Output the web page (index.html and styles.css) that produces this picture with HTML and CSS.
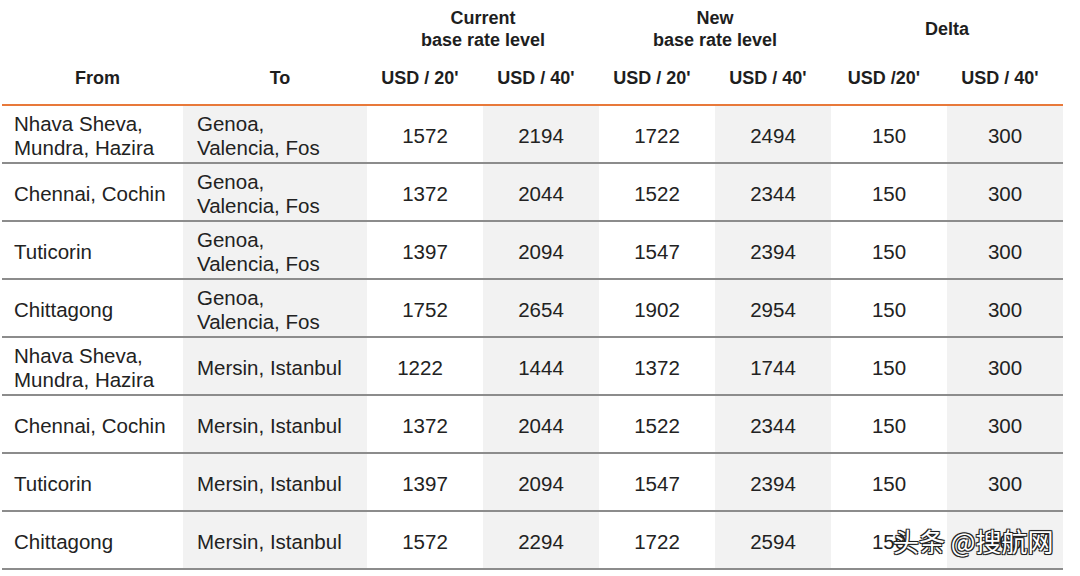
FILE: index.html
```html
<!DOCTYPE html>
<html>
<head>
<meta charset="utf-8">
<link rel="stylesheet" href="styles.css">
</head>
<body>
<div class="page">
  <table class="rates">
    <colgroup>
      <col class="c-from"><col class="c-to">
      <col class="c-num"><col class="c-num"><col class="c-num"><col class="c-num"><col class="c-num"><col class="c-num">
    </colgroup>
    <thead>
      <tr class="h1">
        <th rowspan="2" class="sub lbl">From</th>
        <th rowspan="2" class="sub lbl">To</th>
        <th colspan="2" class="grp">Current<br>base rate level</th>
        <th colspan="2" class="grp">New<br>base rate level</th>
        <th colspan="2" class="grp">Delta</th>
      </tr>
      <tr class="h2">
        <th class="sub unit">USD / 20'</th>
        <th class="sub unit">USD / 40'</th>
        <th class="sub unit">USD / 20'</th>
        <th class="sub unit">USD / 40'</th>
        <th class="sub unit">USD /20'</th>
        <th class="sub unit">USD / 40'</th>
      </tr>
    </thead>
    <tbody>
      <tr><td class="from">Nhava Sheva,<br>Mundra, Hazira</td><td class="to">Genoa,<br>Valencia, Fos</td><td>1572</td><td class="g">2194</td><td>1722</td><td class="g">2494</td><td>150</td><td class="g">300</td></tr>
      <tr><td class="from">Chennai, Cochin</td><td class="to">Genoa,<br>Valencia, Fos</td><td>1372</td><td class="g">2044</td><td>1522</td><td class="g">2344</td><td>150</td><td class="g">300</td></tr>
      <tr><td class="from">Tuticorin</td><td class="to">Genoa,<br>Valencia, Fos</td><td>1397</td><td class="g">2094</td><td>1547</td><td class="g">2394</td><td>150</td><td class="g">300</td></tr>
      <tr><td class="from">Chittagong</td><td class="to">Genoa,<br>Valencia, Fos</td><td>1752</td><td class="g">2654</td><td>1902</td><td class="g">2954</td><td>150</td><td class="g">300</td></tr>
      <tr><td class="from">Nhava Sheva,<br>Mundra, Hazira</td><td class="to">Mersin, Istanbul</td><td class="shift">1222</td><td class="g">1444</td><td>1372</td><td class="g">1744</td><td>150</td><td class="g">300</td></tr>
      <tr><td class="from">Chennai, Cochin</td><td class="to">Mersin, Istanbul</td><td>1372</td><td class="g">2044</td><td>1522</td><td class="g">2344</td><td>150</td><td class="g">300</td></tr>
      <tr><td class="from">Tuticorin</td><td class="to">Mersin, Istanbul</td><td>1397</td><td class="g">2094</td><td>1547</td><td class="g">2394</td><td>150</td><td class="g">300</td></tr>
      <tr><td class="from">Chittagong</td><td class="to">Mersin, Istanbul</td><td>1572</td><td class="g">2294</td><td>1722</td><td class="g">2594</td><td>150</td><td class="g">300</td></tr>
    </tbody>
  </table>
  <div class="watermark">头条 @搜航网</div>
</div>
</body>
</html>
```

FILE: styles.css
```css
html, body {
  margin: 0;
  padding: 0;
  background: #ffffff;
}

.page {
  position: relative;
  width: 1080px;
  height: 576px;
  padding-left: 2px;
  box-sizing: border-box;
  font-family: "Liberation Sans", Arial, sans-serif;
  color: #222222;
}

.rates {
  border-collapse: separate;
  border-spacing: 0;
  table-layout: fixed;
  width: 1061px;
}

.c-from { width: 181px; }
.c-to { width: 184px; }
.c-num { width: 116px; }

.rates th {
  font-weight: bold;
  font-size: 18px;
  line-height: 22px;
  padding: 0;
  text-align: center;
  vertical-align: middle;
  color: #1e1e1e;
}

.h1 th.grp {
  height: 46px;
  padding-top: 6px;
}

.h2 th {
  height: 52px;
}

.rates th.sub {
  border-bottom: 2px solid #e8793a;
}

.rates th.unit {
  padding-right: 10px;
}

.rates th.lbl {
  padding-top: 52px;
  padding-left: 10px;
  height: 52px;
}

.rates td {
  height: 53px;
  padding: 3px 0 0 0;
  border-bottom: 2px solid #8c8c8c;
  font-size: 20.5px;
  line-height: 24px;
  text-align: center;
  vertical-align: middle;
}

.rates td.from {
  text-align: left;
  padding-left: 12px;
}

.rates td.to {
  text-align: left;
  padding-left: 14px;
  background: #f2f2f2;
}

.rates td.g {
  background: #f2f2f2;
}

.rates td.shift {
  padding-right: 10px;
}

.watermark {
  position: absolute;
  left: 893px;
  top: 524px;
  font-family: "Noto Sans CJK SC", sans-serif;
  font-size: 26px;
  line-height: 34px;
  color: #ffffff;
  text-shadow: -1px -1px 0 #222, 1px -1px 0 #222, -1px 1px 0 #222, 1px 1px 0 #222, 0 0 2px #000;
  white-space: nowrap;
}
```
